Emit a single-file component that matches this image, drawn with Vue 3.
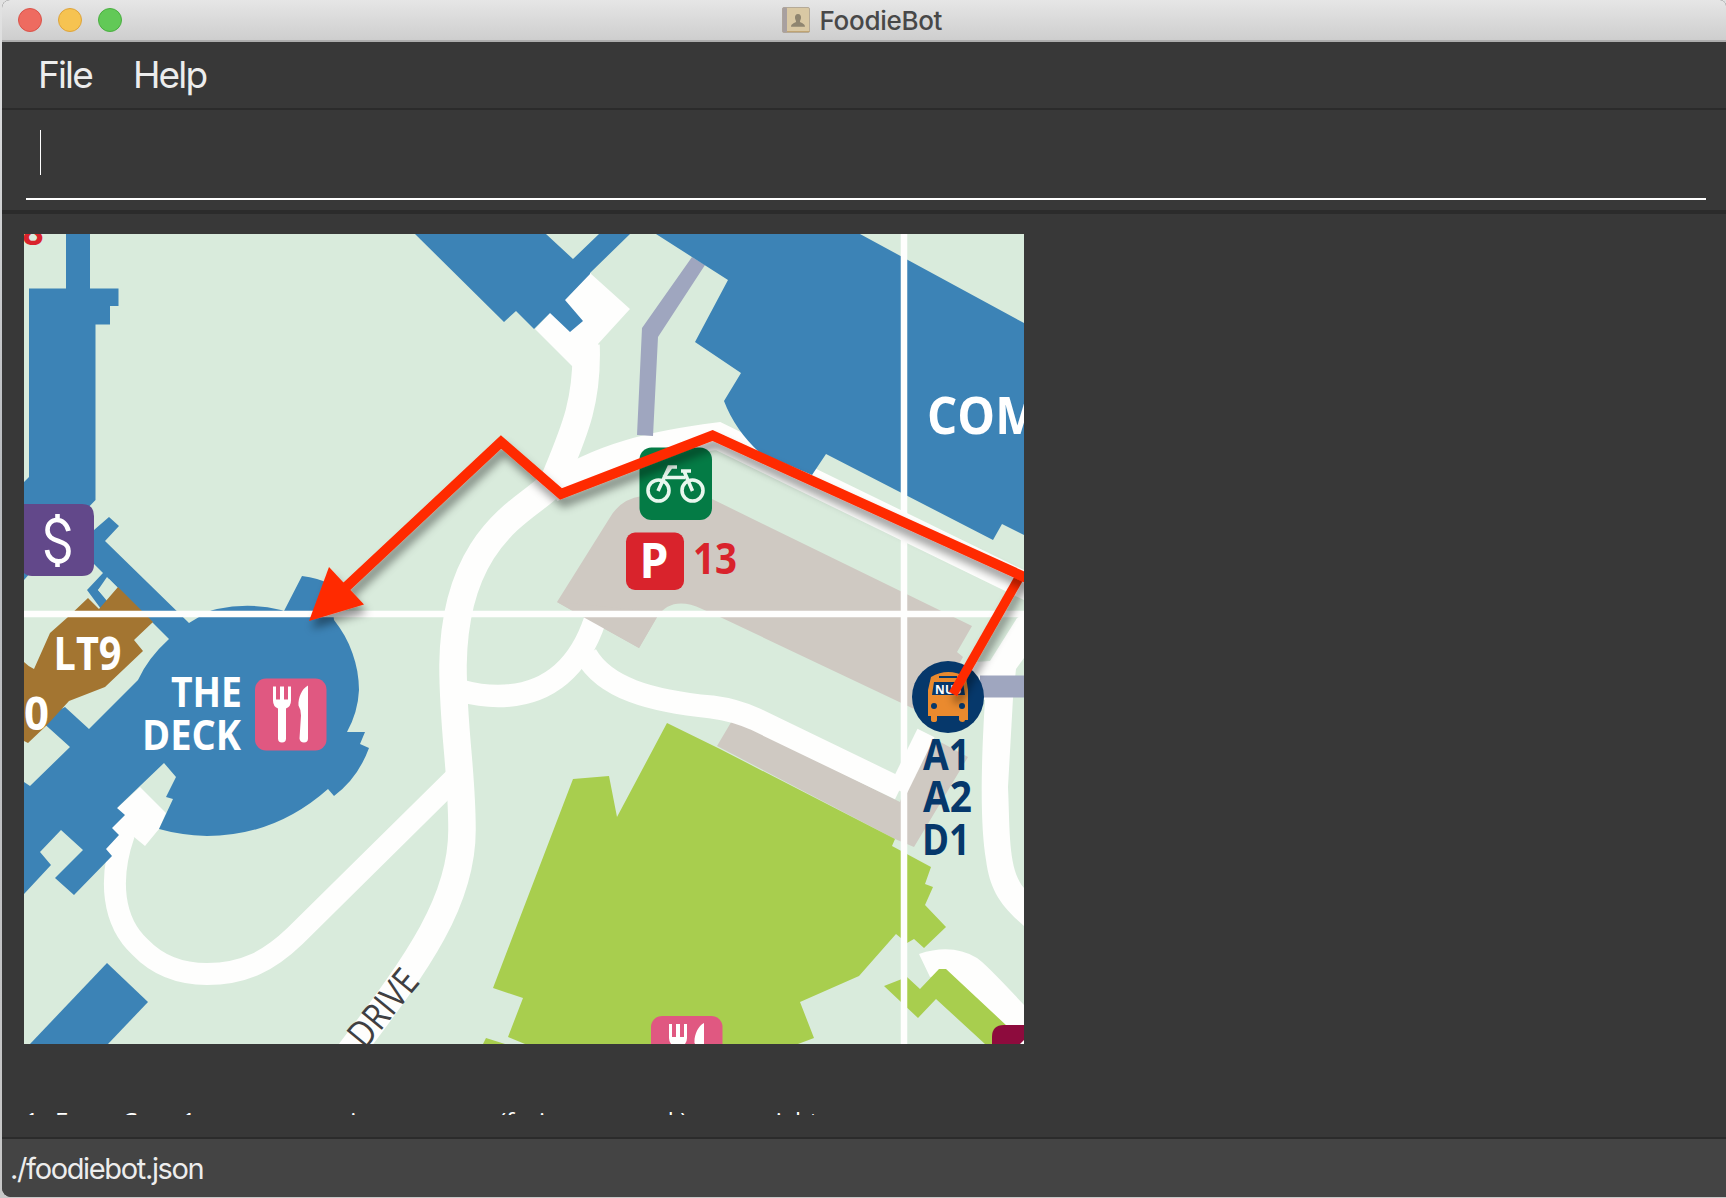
<script setup>
const menus = ['File', 'Help']

const steps = [
  { text: '1.', width: 30 },
  { text: 'From', width: 67 },
  { text: 'Com', width: 60 },
  { text: '1', width: 27 },
  { text: 'cross over', width: 115 },
  { text: 'using our own way', width: 175 },
  { text: '(facing', width: 90 },
  { text: 'car park)', width: 116 },
  { text: 'on us', width: 61 },
  { text: 'right', width: 80 },
]

const foodPins = [
  { x: 255, y: 678.5 },
  { x: 651, y: 1016 },
]
</script>

<template>
  <div class="desktop">
    <div class="window">
      <header class="titlebar">
        <div class="lights">
          <span class="light close"></span>
          <span class="light minimise"></span>
          <span class="light zoom"></span>
        </div>
        <div class="title">
          <svg width="28" height="26" viewBox="0 0 28 26">
            <rect x="0.5" y="0.5" width="27" height="25" rx="1.5" fill="#d9c8a4" stroke="#b5aa98" />
            <rect x="0.5" y="0.5" width="4.5" height="25" rx="1" fill="#a8a0a0" />
            <path d="M5 24.5H27.5" stroke="#c0a473" />
            <path d="M16 7c2.300 0 3.200 1.700 3 4-.1 1.500-.9 2.200-1.100 3.600.2 1.300 5 1.800 5.100 5.100H9c.1-3.300 4.900-3.800 5.100-5.100-.2-1.400-1-2.100-1.100-3.600-.2-2.300.7-4 3-4z" fill="#8f8570" />
          </svg>
          <span class="title-text">FoodieBot</span>
        </div>
      </header>

      <nav class="menubar">
        <span v-for="m in menus" :key="m" class="menu">{{ m }}</span>
      </nav>

      <section class="command">
        <div class="field"><span class="caret"></span></div>
      </section>

      <main class="content">
        <svg class="map" width="1000" height="810" viewBox="24 234 1000 810">
          <defs>
            <filter id="shade" x="-20%" y="-20%" width="140%" height="140%">
              <feDropShadow dx="3" dy="8" stdDeviation="4" flood-color="#000" flood-opacity="0.4" />
            </filter>
          </defs>
          <rect x="24" y="234" width="1000" height="810" fill="#d9ebdc" />

          <!-- car parks -->
          <g fill="#cfc9c2">
            <path d="M557 602L609 519Q620 499 642 496L712 499L972 626L957 652L963 657L930 716L912 708L720 617L702 609Q672 595 657 617L639 648Z" />
            <path d="M733 719L717 746L895 839L914 847L968 757L933 738L907 780L900 802Z" />
          </g>

          <!-- roads -->
          <g fill="none" stroke="#fefefd">
            <path d="M586 345C588 400 575 430 555 478C545 505 455 520 453 665C453 730 462 770 462 830C462 900 420 960 350 1052" stroke-width="27.500" />
            <path d="M550 490C600 456 655 444 718 436L1030 588" stroke-width="27" />
            <path d="M124 834C108 880 113 922 140 947C160 968 183 974 207 974C245 974 270 960 295 936L458 775" stroke-width="22" />
            <path d="M462 691Q480 696 498 696C550 696 580 665 595 620" stroke-width="22.500" />
            <path d="M586 655C605 688 650 701 712 707Q735 710 755 719L900 789" stroke-width="23" />
            <path d="M898 790L926 733" stroke-width="19" />
          </g>
          <path d="M557 602L585 618L639 648L660 612Z" fill="#cfc9c2" />
          <g fill="#fefefd">
            <path d="M535 329L550 313L565 300L590 273L630 309L598 344L599 370L572 366Z" />
            <path d="M1017 618L990 661L975 662L955 690L985 700C980 780 981 830 986 860C990 890 1000 905 1024 926V888C1008 870 1010 830 1008 787L1013 698L1016 669L1024 658V614Z" />
            <path d="M140 787L166 813L159 829L145 846L134 837L118 864L100 860L104 820Z" />
            <path d="M919 954Q952 943 977 958Q985 963 1024 1005V1044H1010L946 975L930 977Z" />
          </g>

          <!-- covered walkways -->
          <g fill="#9fa6bf">
            <path d="M692 257L705 265L658 337L653 436L637 435L642 328Z" />
            <path d="M980 675.500H1024V697.500H980Z" />
          </g>

          <!-- blue buildings -->
          <g fill="#3c83b6">
            <path d="M66 234H90V288.500H118.500V306H110V324.500H95.500V500L80 516L24 580V482L29 477V288.500H66Z" />
            <path d="M94 530L109 517L119 526L105 541L189 623L199 617Q207 611 217 609Q250 602 281 610L284 611L302 576Q318 578 330 584L334 620C350 640 359 665 359 690Q358 712 347 732L365 732L360 744L369 748Q358 778 334 796L328 789Q275 836 207 836Q180 835 159 829L173 799L166 797L176 777L164 763L117 808L125 815L112 828L119 835L106 849L112 856L74 895L55 878L83 850L61 830L40 852L51 865L24 894V782L30 786L70 747L40 720L65 707L89 729L138 680Q148 658 169 639L130 600L107 577L98 590L110 603L101 609L87 590L103 573L80 550Z" />
            <path d="M415 234L504 322L516 311L534 329L550 313L570 332L583 321L565 300L590 274V273L630 234H599L573 259L546 234Z" />
            <path d="M656 234L728 280L695 342L741 373L724 401Q735 430 760 453L812 475L826 454L993 540L1002 524L1024 535V323L860 234Z" />
            <path d="M107 963L148 1002L108 1044H30Z" />
          </g>
          <path d="M109 579L98 590L107 601L118 588Z" fill="#d9ebdc" />
          <path d="M24 662Q29 667 34 669L50 633L68 617L88 598L99 609L118 587L153 622L134 640L143 651L105 687L69 701L47 725L28 743L24 741Z" fill="#a37531" />

          <!-- green buildings -->
          <g fill="#a8ce4e">
            <path d="M573 779L609 776L617 817L667 723L720 749L895 839L892 846L931 867L925 884L933 887L925 905L946 927L924 948L914 939L907 943L896 934L859 976L800 1002L814 1038L798 1044H525L508 1037L523 998L493 988Z" />
            <path d="M486 1038L505 1044H483Z" />
            <path d="M884 986L907 977L920 989L939 969H946L1007 1026L1004 1044H985L936 999L918 1018Z" />
          </g>

          <!-- grid -->
          <path d="M24 614H1024M904 234V1044" stroke="#fefefd" stroke-width="6.500" />

          <g class="bold" fill="#fff">
            <text x="53.500" y="669.500" font-size="46.500" textLength="68" lengthAdjust="spacingAndGlyphs">LT9</text>
            <text x="24" y="729.500" font-size="46.500" textLength="25" lengthAdjust="spacingAndGlyphs">0</text>
            <text x="171" y="706.500" font-size="42" textLength="71" lengthAdjust="spacingAndGlyphs">THE</text>
            <text x="142" y="750" font-size="42" textLength="99" lengthAdjust="spacingAndGlyphs">DECK</text>
            <text x="927" y="433.500" font-size="52" textLength="113" lengthAdjust="spacingAndGlyphs">COM</text>
          </g>
          <text class="bold" x="22.500" y="244.500" font-size="37" fill="#d9232c">8</text>

          <text class="street" transform="translate(365 1050) rotate(-50.500)" font-size="37" textLength="88" lengthAdjust="spacingAndGlyphs">DRIVE</text>

          <!-- money pin -->
          <path d="M24 504H82Q94 504 94 516V564Q94 576 82 576H32Q27 576 24 573Z" fill="#62488a" />
          <path d="M68.500 531C65.500 516 47.500 517 47.500 530C47.500 544 68.500 538 68.500 551C68.500 565 49 565 47 550M57.500 514V520M57.500 561V567" fill="none" stroke="#fff" stroke-width="4.600" />

          <!-- food pins -->
          <g v-for="(p, i) in foodPins" :key="i" :transform="`translate(${p.x} ${p.y})`">
            <rect width="71.500" height="72" rx="11" fill="#e05881" />
            <path d="M18 8V22Q18 28 23 30V60Q23 64 27 64T31 60V30Q36 28 36 22V8H33V21H29V8H25V21H21V8Z" fill="#fff" />
            <path d="M53 7C47 10 43 19 43.500 27Q46 31 46 37L44.500 60Q45 64 49 64T53 60Z" fill="#fff" />
          </g>

          <!-- bicycle pin -->
          <rect x="639.500" y="447.500" width="72.500" height="72.500" rx="12" fill="#047b45" />
          <g fill="none" stroke="#e9f7ee" stroke-width="3.600">
            <circle cx="658.500" cy="490.500" r="10.500" />
            <circle cx="692.500" cy="490.500" r="10.500" />
            <path d="M658 491L669 467H677M664 477.500H685M681 471H691M684 471L692.500 491M664 477L671 467" />
          </g>

          <!-- parking pin -->
          <rect x="626" y="532.500" width="58" height="57.500" rx="9" fill="#d9232c" />
          <text class="bold" x="639.500" y="578" font-size="48" fill="#fff" textLength="29" lengthAdjust="spacingAndGlyphs">P</text>
          <text class="bold" x="693" y="574" font-size="43" fill="#d9232c" textLength="44" lengthAdjust="spacingAndGlyphs">13</text>

          <!-- bus stop pin -->
          <circle cx="948" cy="697" r="36" fill="#06386b" />
          <path d="M931 677Q948 667 966 677L968 690V720H965Q965 722 962.500 722T959 720V716H937V720Q937 722 934 722T931 720V716H928V690Z" fill="#ea8a2e" />
          <path d="M934 682H963L965 695H932ZM939 676H957V678H939Z" fill="#06386b" />
          <circle cx="934" cy="706" r="3" fill="#06386b" />
          <circle cx="962" cy="706" r="3" fill="#06386b" />
          <text class="bold" x="935" y="693.500" font-size="12" fill="#fff" textLength="26">NUS</text>
          <g class="bold" fill="#06386b">
            <text x="923" y="770" font-size="42.500" textLength="47" lengthAdjust="spacingAndGlyphs">A1</text>
            <text x="923" y="812" font-size="42.500" textLength="49" lengthAdjust="spacingAndGlyphs">A2</text>
            <text x="922" y="855" font-size="42.500" textLength="48" lengthAdjust="spacingAndGlyphs">D1</text>
          </g>

          <path d="M1024 1025H1004Q992 1025 992 1037V1044H1024Z" fill="#8d0b3d" />
          <path d="M1020 1044L1024 1040V1044Z" fill="#fff" />

          <!-- walking route -->
          <path d="M953 694L1019 578" fill="none" stroke="#ff2a00" stroke-width="9.500" filter="url(#shade)" />
          <g filter="url(#shade)">
            <path d="M1030 579.500L712.500 435.500L561 494L501 442L345 588" fill="none" stroke="#ff2a00" stroke-width="10" />
            <path d="M309 621L329 567L364 604.500Z" fill="#ff2a00" />
          </g>
        </svg>

        <div class="directions">
          <span v-for="(s, i) in steps" :key="i" class="word" :style="{ width: s.width + 'px' }">{{ s.text }}</span>
        </div>
      </main>

      <footer class="statusbar"><span>./foodiebot.json</span></footer>
    </div>
  </div>
</template>

<style>
html,
body {
  background: #c4c4c4;
}
</style>

<style scoped>
.desktop {
  box-sizing: border-box;
  width: 1726px;
  height: 1198px;
  padding: 0 0 1px 2px;
  overflow: hidden;
  background: linear-gradient(#e2e2e2, #b9bcc0 40%, #c8c8c8);
  font-family: Inter, "Liberation Sans", sans-serif;
}
.window {
  display: flex;
  flex-direction: column;
  height: 1197px;
  overflow: hidden;
  border-radius: 8px 6px 0 9px;
  background: #383838;
}
.titlebar {
  position: relative;
  display: flex;
  align-items: center;
  justify-content: center;
  box-sizing: border-box;
  height: 42px;
  border-bottom: 2px solid #adadad;
  background: linear-gradient(#e6e6e6, #cecece);
}
.lights {
  position: absolute;
  left: 16px;
  top: 8px;
  display: flex;
  gap: 16px;
}
.light {
  box-sizing: border-box;
  width: 24px;
  height: 24px;
  border: 1px solid;
  border-radius: 50%;
}
.close {
  background: #ee6b60;
  border-color: #d9534a;
}
.minimise {
  background: #f6c351;
  border-color: #dda33c;
}
.zoom {
  background: #62c957;
  border-color: #4aae40;
}
.title {
  display: flex;
  align-items: center;
  gap: 9.500px;
  width: 164px;
  white-space: nowrap;
}
.title svg {
  flex: none;
}
.title-text {
  padding-top: 2px;
  color: #484848;
  font-size: 26px;
  font-weight: 500;
  letter-spacing: -0.300px;
  line-height: 38px;
}
.menubar {
  display: flex;
  box-sizing: border-box;
  height: 68px;
  gap: 41px;
  padding: 1px 0 0 36px;
  border-bottom: 2px solid #2b2b2b;
}
.menu {
  color: #ededed;
  font-size: 37px;
  line-height: 64px;
  letter-spacing: -1.850px;
}
.command {
  box-sizing: border-box;
  height: 104px;
  padding: 10px 20px 10px 24px;
  border-bottom: 4px solid #2b2b2b;
}
.field {
  box-sizing: border-box;
  height: 80px;
  padding: 10px 0 0 14px;
  border-bottom: 2px solid #fff;
}
.caret {
  display: block;
  width: 1px;
  height: 45px;
  background: #fff;
}
.content {
  flex: 1;
  min-height: 0;
  padding: 20px 0 0 22px;
}
.map {
  display: block;
}
.bold {
  font-family: "Open Sans", "Noto Sans", sans-serif;
  font-weight: 700;
}
.street {
  font-family: "Open Sans", "Noto Sans", sans-serif;
  fill: #3f3f42;
}
.directions {
  display: flex;
  height: 7px;
  margin-top: 64px;
  padding-left: 1px;
  overflow: hidden;
  color: #fff;
  font-family: "Open Sans", "Noto Sans", sans-serif;
  font-size: 24px;
  line-height: 25px;
}
.word {
  flex: none;
  white-space: nowrap;
}
.statusbar {
  box-sizing: border-box;
  height: 60px;
  padding-left: 8px;
  border-top: 2px solid #2b2b2b;
  background: #444;
  color: #ededed;
  font-size: 29px;
  line-height: 59px;
  letter-spacing: -1.350px;
}
</style>
